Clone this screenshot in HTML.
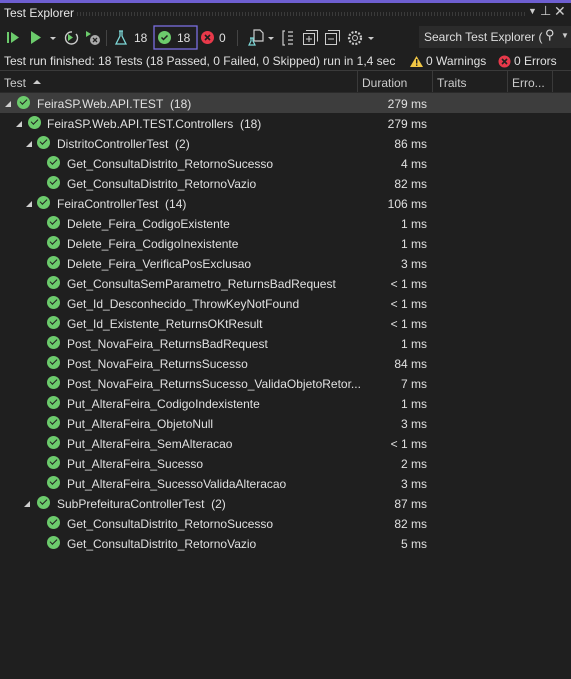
<!DOCTYPE html>
<html><head><meta charset="utf-8"><style>
*{margin:0;padding:0;box-sizing:border-box}
body{width:571px;height:679px;background:#1f1f1f;color:#e0e0e0;font-family:"Liberation Sans",sans-serif;font-size:12px;position:relative;overflow:hidden}
.a{position:absolute;white-space:nowrap}
.chk{position:absolute;width:13px;height:13px;border-radius:50%;background:#6ccb6c}
.chk:after{content:"";position:absolute;left:3px;top:3px;width:6px;height:3px;border-left:1.6px solid #1f1f1f;border-bottom:1.6px solid #1f1f1f;transform:rotate(-45deg)}
.tri{position:absolute;width:0;height:0;border-left:6px solid transparent;border-bottom:6px solid #cfcfcf}
.row{position:absolute;left:0;width:571px;height:20px}
.dur{position:absolute;right:144px;top:4px}
.txt{position:absolute;top:4px}
</style></head><body>
<div class="a" style="left:0;top:0;width:571px;height:3px;background:#6e5fd1"></div>
<div class="a" style="left:4px;top:6px;font-size:12px;color:#e8e8e8">Test Explorer</div>
<div class="a" style="left:76px;top:12px;width:450px;height:4px;background-image:radial-gradient(#555 0.6px,transparent 0.7px);background-size:3px 2px"></div>
<div class="a" style="left:528px;top:6px;color:#ccc;font-size:9px">▼</div>
<div class="a" style="left:540px;top:3px;color:#ccc;font-size:13px">⊥</div>
<div class="a" style="left:554px;top:3px;color:#ccc;font-size:14px">✕</div>

<svg class="a" style="left:0;top:24px" width="400" height="28">
<rect x="7" y="8" width="2" height="11" fill="#6ccb6c"/><path d="M11 8 L19 13.5 L11 19Z" fill="#6ccb6c"/>
<path d="M31 7 L41 13.5 L31 20Z" fill="#6ccb6c"/>
<path d="M50 13 L56 13 L53 16Z" fill="#ccc"/>
<path d="M72 8 A6 6 0 1 0 76 10" fill="none" stroke="#ccc" stroke-width="1.4"/><path d="M68 10 L73 13.5 L68 17Z" fill="#6ccb6c"/>
<path d="M86 7 L91 10 L86 13Z" fill="#6ccb6c"/><circle cx="95" cy="16" r="5" fill="#aaa"/><path d="M93 14 L97 18 M97 14 L93 18" stroke="#222" stroke-width="1.3"/>
<rect x="106" y="6" width="1" height="16" fill="#444"/>
<path d="M119 7 L123 7 M120 7 L120 12 L116 20 L126 20 L122 12 L122 7" fill="none" stroke="#7ed8d8" stroke-width="1.3"/>
<rect x="154" y="2" width="43" height="23" fill="none" stroke="#7a6ee0" stroke-width="1.3"/>
<circle cx="164.5" cy="13.5" r="6.5" fill="#6ccb6c"/><path d="M161.5 13.5 L163.5 15.5 L167.5 11.5" fill="none" stroke="#1f1f1f" stroke-width="1.5"/>
<circle cx="207.5" cy="13.5" r="6.5" fill="#e8394a"/><path d="M205 11 L210 16 M210 11 L205 16" stroke="#1f1f1f" stroke-width="1.6"/>
<rect x="237" y="6" width="1" height="16" fill="#444"/>
<path d="M254 6 h6 l3 3 v8 h-9z" fill="none" stroke="#ccc" stroke-width="1.2"/><path d="M250 14 h4 M251 14 v3 l-2 4 h6 l-2 -4 v-3" fill="none" stroke="#7ed8d8" stroke-width="1.2"/>
<path d="M268 13 L274 13 L271 16Z" fill="#ccc"/>
<path d="M285 7 h-2 v14 h2 M288 8 h5 M288 12 h5 M288 16 h5 M288 20 h5" fill="none" stroke="#ccc" stroke-width="1.2"/>
<rect x="303.5" y="9.5" width="11" height="11" fill="none" stroke="#ccc"/><path d="M306 6.5 h11.5 v11" fill="none" stroke="#ccc"/><path d="M309 12 v6 M306 15 h6" stroke="#ccc"/>
<rect x="325.5" y="9.5" width="11" height="11" fill="none" stroke="#ccc"/><path d="M328 6.5 h11.5 v11" fill="none" stroke="#ccc"/><path d="M328 15 h6" stroke="#ccc"/>
<circle cx="355" cy="14" r="6" fill="none" stroke="#ccc" stroke-width="2.2" stroke-dasharray="2 1.5"/><circle cx="355" cy="14" r="2.5" fill="none" stroke="#ccc"/>
<path d="M368 13 L374 13 L371 16Z" fill="#ccc"/>
</svg>
<div class="a" style="left:134px;top:31px">18</div>
<div class="a" style="left:177px;top:31px">18</div>
<div class="a" style="left:219px;top:31px">0</div>
<div class="a" style="left:419px;top:26px;width:152px;height:22px;background:#2b2b2b"></div>
<div class="a" style="left:424px;top:30px;color:#ddd">Search Test Explorer (</div>
<div class="a" style="left:545px;top:27px;color:#ddd;font-size:13px">⚲</div>
<div class="a" style="left:561px;top:31px;color:#ccc;font-size:8px">▼</div>

<div class="a" style="left:4px;top:54px">Test run finished: 18 Tests (18 Passed, 0 Failed, 0 Skipped) run in 1,4 sec</div>
<svg class="a" style="left:410px;top:55px" width="14" height="13"><path d="M6.5 1 L13 12 L0 12Z" fill="#f2c744"/><rect x="6" y="4" width="1.4" height="4.5" fill="#222"/><rect x="6" y="9.5" width="1.4" height="1.4" fill="#222"/></svg>
<div class="a" style="left:426px;top:54px">0 Warnings</div>
<svg class="a" style="left:498px;top:55px" width="13" height="13"><circle cx="6.5" cy="6.5" r="6" fill="#e8394a"/><path d="M4 4 L9 9 M9 4 L4 9" stroke="#222" stroke-width="1.6"/></svg>
<div class="a" style="left:514px;top:54px">0 Errors</div>

<div class="a" style="left:0;top:70px;width:571px;height:1px;background:#3a3a3a"></div>
<div class="a" style="left:0;top:92px;width:571px;height:1px;background:#2a2a2a"></div>
<div class="a" style="left:357px;top:71px;width:1px;height:21px;background:#3a3a3a"></div>
<div class="a" style="left:432px;top:71px;width:1px;height:21px;background:#3a3a3a"></div>
<div class="a" style="left:507px;top:71px;width:1px;height:21px;background:#3a3a3a"></div>
<div class="a" style="left:552px;top:71px;width:1px;height:21px;background:#3a3a3a"></div>
<div class="a" style="left:4px;top:76px;color:#ccc">Test</div>
<div class="a" style="left:33px;top:80px;width:0;height:0;border-left:4px solid transparent;border-right:4px solid transparent;border-bottom:4px solid #ccc"></div>
<div class="a" style="left:362px;top:76px;color:#ccc">Duration</div>
<div class="a" style="left:437px;top:76px;color:#ccc">Traits</div>
<div class="a" style="left:512px;top:76px;color:#ccc">Erro...</div>

<div class="row" style="top:93px;background:#3d3d3d"><div class="tri" style="left:5px;top:8px"></div><div class="chk" style="left:17px;top:3px"></div><div class="txt" style="left:37px">FeiraSP.Web.API.TEST&nbsp; (18)</div><div class="dur">279 ms</div></div>
<div class="row" style="top:113px"><div class="tri" style="left:16px;top:8px"></div><div class="chk" style="left:28px;top:3px"></div><div class="txt" style="left:47px">FeiraSP.Web.API.TEST.Controllers&nbsp; (18)</div><div class="dur">279 ms</div></div>
<div class="row" style="top:133px"><div class="tri" style="left:26px;top:8px"></div><div class="chk" style="left:37px;top:3px"></div><div class="txt" style="left:57px">DistritoControllerTest&nbsp; (2)</div><div class="dur">86 ms</div></div>
<div class="row" style="top:153px"><div class="chk" style="left:47px;top:3px"></div><div class="txt" style="left:67px">Get_ConsultaDistrito_RetornoSucesso</div><div class="dur">4 ms</div></div>
<div class="row" style="top:173px"><div class="chk" style="left:47px;top:3px"></div><div class="txt" style="left:67px">Get_ConsultaDistrito_RetornoVazio</div><div class="dur">82 ms</div></div>
<div class="row" style="top:193px"><div class="tri" style="left:26px;top:8px"></div><div class="chk" style="left:37px;top:3px"></div><div class="txt" style="left:57px">FeiraControllerTest&nbsp; (14)</div><div class="dur">106 ms</div></div>
<div class="row" style="top:213px"><div class="chk" style="left:47px;top:3px"></div><div class="txt" style="left:67px">Delete_Feira_CodigoExistente</div><div class="dur">1 ms</div></div>
<div class="row" style="top:233px"><div class="chk" style="left:47px;top:3px"></div><div class="txt" style="left:67px">Delete_Feira_CodigoInexistente</div><div class="dur">1 ms</div></div>
<div class="row" style="top:253px"><div class="chk" style="left:47px;top:3px"></div><div class="txt" style="left:67px">Delete_Feira_VerificaPosExclusao</div><div class="dur">3 ms</div></div>
<div class="row" style="top:273px"><div class="chk" style="left:47px;top:3px"></div><div class="txt" style="left:67px">Get_ConsultaSemParametro_ReturnsBadRequest</div><div class="dur">&lt; 1 ms</div></div>
<div class="row" style="top:293px"><div class="chk" style="left:47px;top:3px"></div><div class="txt" style="left:67px">Get_Id_Desconhecido_ThrowKeyNotFound</div><div class="dur">&lt; 1 ms</div></div>
<div class="row" style="top:313px"><div class="chk" style="left:47px;top:3px"></div><div class="txt" style="left:67px">Get_Id_Existente_ReturnsOKtResult</div><div class="dur">&lt; 1 ms</div></div>
<div class="row" style="top:333px"><div class="chk" style="left:47px;top:3px"></div><div class="txt" style="left:67px">Post_NovaFeira_ReturnsBadRequest</div><div class="dur">1 ms</div></div>
<div class="row" style="top:353px"><div class="chk" style="left:47px;top:3px"></div><div class="txt" style="left:67px">Post_NovaFeira_ReturnsSucesso</div><div class="dur">84 ms</div></div>
<div class="row" style="top:373px"><div class="chk" style="left:47px;top:3px"></div><div class="txt" style="left:67px">Post_NovaFeira_ReturnsSucesso_ValidaObjetoRetor...</div><div class="dur">7 ms</div></div>
<div class="row" style="top:393px"><div class="chk" style="left:47px;top:3px"></div><div class="txt" style="left:67px">Put_AlteraFeira_CodigoIndexistente</div><div class="dur">1 ms</div></div>
<div class="row" style="top:413px"><div class="chk" style="left:47px;top:3px"></div><div class="txt" style="left:67px">Put_AlteraFeira_ObjetoNull</div><div class="dur">3 ms</div></div>
<div class="row" style="top:433px"><div class="chk" style="left:47px;top:3px"></div><div class="txt" style="left:67px">Put_AlteraFeira_SemAlteracao</div><div class="dur">&lt; 1 ms</div></div>
<div class="row" style="top:453px"><div class="chk" style="left:47px;top:3px"></div><div class="txt" style="left:67px">Put_AlteraFeira_Sucesso</div><div class="dur">2 ms</div></div>
<div class="row" style="top:473px"><div class="chk" style="left:47px;top:3px"></div><div class="txt" style="left:67px">Put_AlteraFeira_SucessoValidaAlteracao</div><div class="dur">3 ms</div></div>
<div class="row" style="top:493px"><div class="tri" style="left:24px;top:8px"></div><div class="chk" style="left:37px;top:3px"></div><div class="txt" style="left:57px">SubPrefeituraControllerTest&nbsp; (2)</div><div class="dur">87 ms</div></div>
<div class="row" style="top:513px"><div class="chk" style="left:47px;top:3px"></div><div class="txt" style="left:67px">Get_ConsultaDistrito_RetornoSucesso</div><div class="dur">82 ms</div></div>
<div class="row" style="top:533px"><div class="chk" style="left:47px;top:3px"></div><div class="txt" style="left:67px">Get_ConsultaDistrito_RetornoVazio</div><div class="dur">5 ms</div></div>
</body></html>
